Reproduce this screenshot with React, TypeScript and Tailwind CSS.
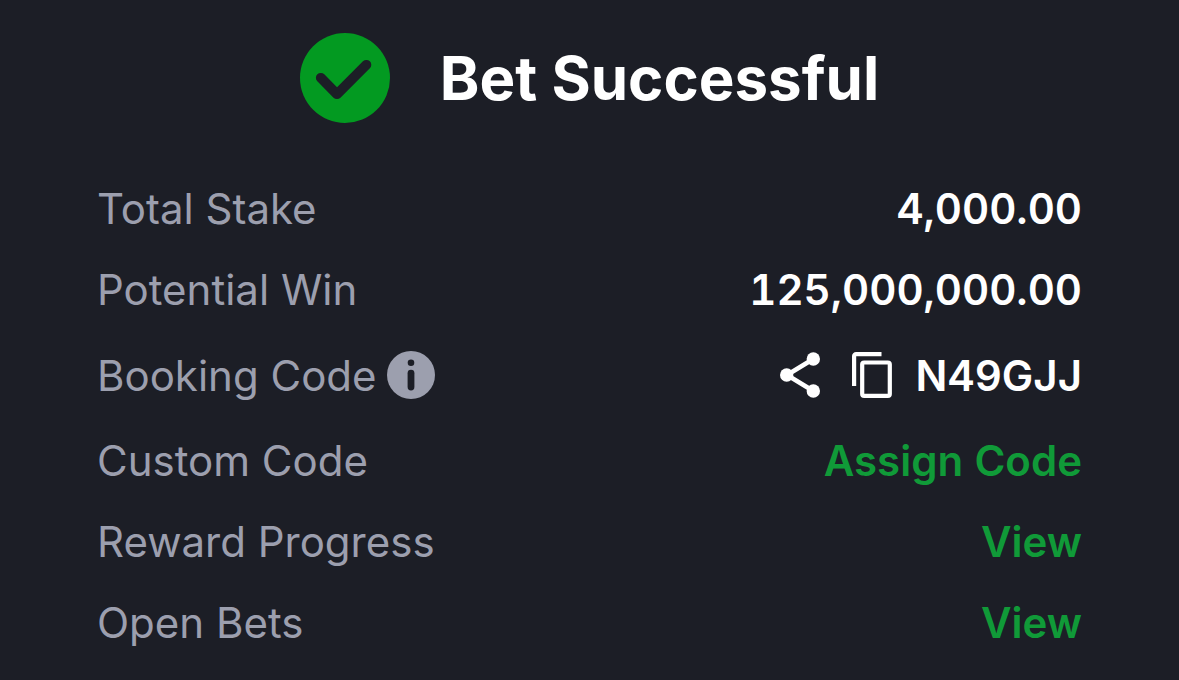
import type { ReactNode } from "react";

function Row({ label, children }: { label: ReactNode; children: ReactNode }) {
  return (
    <div className="flex items-center justify-between">
      <dt className="flex items-center gap-2.5 text-[#9c9fae]">{label}</dt>
      <dd className="flex items-center font-semibold tabular-nums text-white">{children}</dd>
    </div>
  );
}

function CheckIcon() {
  return (
    <svg className="size-[90px]" viewBox="0 0 90 90" fill="none" aria-hidden="true">
      <circle cx="45" cy="45" r="45" fill="#039a21" />
      <path d="M20.8 44.8 37 61.2 66.4 31.8" stroke="#1c1e26" strokeWidth="9.8" strokeLinecap="round" strokeLinejoin="round" />
    </svg>
  );
}

function InfoIcon() {
  return (
    <svg className="size-12" viewBox="0 0 48 48" aria-hidden="true">
      <circle cx="24" cy="24" r="24" fill="#9c9fae" />
      <circle cx="24" cy="11.8" r="3.3" fill="#1c1e26" />
      <rect x="20.6" y="18.8" width="6.8" height="20.6" rx="3.4" fill="#1c1e26" />
    </svg>
  );
}

function ShareIcon() {
  return (
    <svg className="h-[46px] w-10" viewBox="0 0 40 46" fill="white" aria-hidden="true">
      <path d="M33.3 7 7 23 33.3 39" fill="none" stroke="white" strokeWidth="4.6" />
      <circle cx="33.3" cy="7" r="6.7" />
      <circle cx="6.7" cy="23" r="6.7" />
      <circle cx="33.3" cy="39" r="6.7" />
    </svg>
  );
}

function CopyIcon() {
  return (
    <svg className="h-[46px] w-10" viewBox="0 0 40 46" fill="none" stroke="white" strokeWidth="4.2" aria-hidden="true">
      <path d="M2.1 34V4.1a2 2 0 0 1 2-2H29.5" />
      <rect x="10.2" y="10.5" width="27.6" height="33.4" rx="2" />
    </svg>
  );
}

export default function App() {
  return (
    <main className="min-h-screen bg-[#1c1e26] px-[97px] pt-[33px] pb-6 font-[Inter,sans-serif] text-[42px] leading-[51px]">
      <header className="flex items-center justify-center gap-[50px]">
        <CheckIcon />
        <h1 className="text-[60px] font-bold leading-[76px] text-white">Bet Successful</h1>
      </header>
      <dl className="mt-[60px] flex flex-col gap-[30px]">
        <Row label="Total Stake">4,000.00</Row>
        <Row label="Potential Win">125,000,000.00</Row>
        <Row
          label={
            <>
              Booking Code
              <button type="button" aria-label="About booking codes" className="py-1.5"><InfoIcon /></button>
            </>
          }
        >
          <button type="button" aria-label="Share" className="mr-8"><ShareIcon /></button>
          <button type="button" aria-label="Copy" className="mr-6"><CopyIcon /></button>
          N49GJJ
        </Row>
        <Row label="Custom Code"><a href="#assign" className="text-[#109a38]">Assign Code</a></Row>
        <Row label="Reward Progress"><a href="#rewards" className="text-[#109a38]">View</a></Row>
        <Row label="Open Bets"><a href="#bets" className="text-[#109a38]">View</a></Row>
      </dl>
    </main>
  );
}
